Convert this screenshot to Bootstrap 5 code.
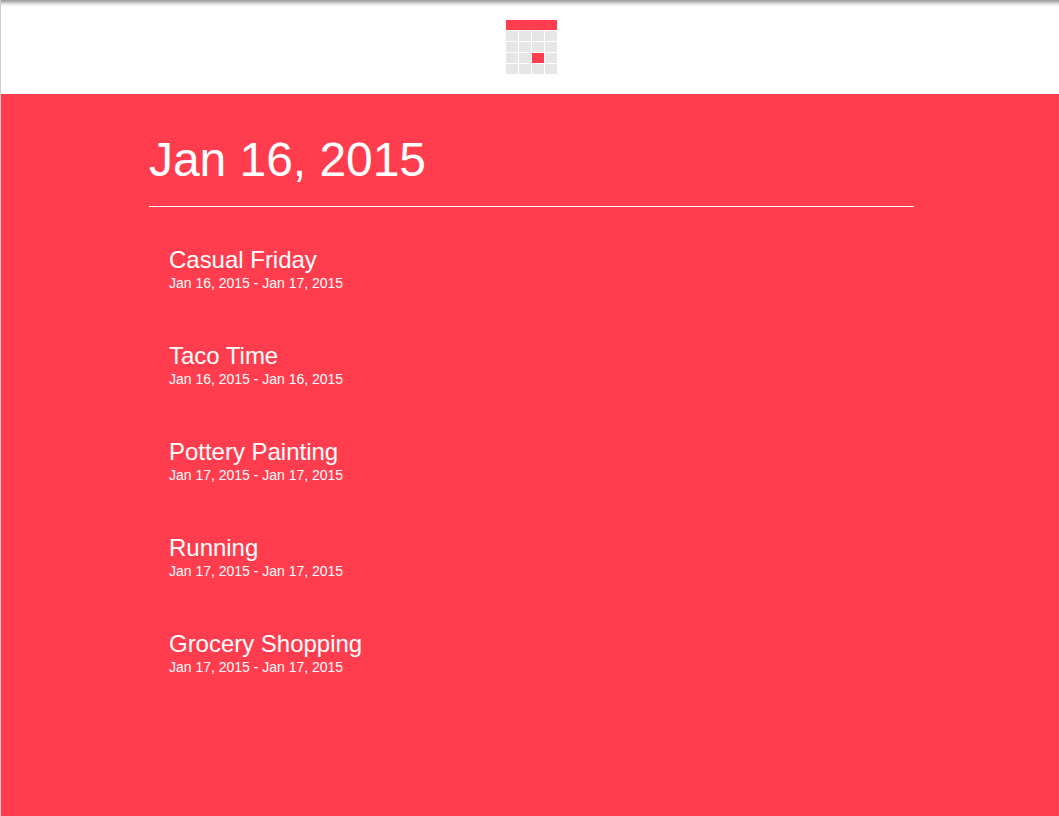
<!DOCTYPE html>
<html lang="en">
<head>
<meta charset="utf-8">
<meta name="viewport" content="width=device-width, initial-scale=1">
<title>Jan 16, 2015</title>
<link href="https://cdn.jsdelivr.net/npm/bootstrap@5.3.0/dist/css/bootstrap.min.css" rel="stylesheet">
<style>
body{font-family:"Liberation Sans",Arial,sans-serif;background:#fff;color:#fff;height:816px;border-left:1px solid #ccc;overflow:hidden}
.topbar{height:94px;padding:20px 0 0 2px;background:linear-gradient(#999 0,#a6a6a6 1px,#d0d0d0 3px,#f0f0f0 5px,#fff 7px)}
.agenda{background:#ff3d4e}
.agenda-inner{width:765px;margin-left:148px}
.day-title{font-size:48px;line-height:52px;font-weight:400;letter-spacing:-.05px;padding:40px 0 20px;margin:0;border-bottom:1px solid #fff}
.event-list{padding:39px 20px 0}
.event-item{height:96px}
.event-item h2{font-size:24px;line-height:27px;font-weight:400;letter-spacing:-.02px;margin:0}
.event-item p{font-size:14px;line-height:20px;letter-spacing:-.01px;margin:0}
</style>
</head>
<body class="d-flex flex-column">
<header class="topbar d-flex justify-content-center align-items-start flex-shrink-0">
<svg width="51" height="54" viewBox="0 0 51 54" shape-rendering="crispEdges" aria-hidden="true">
<path fill="#ff3d4e" d="M0 0h51v10H0z"/>
<path fill="#e6e6e6" d="M0 11h12v10H0zM13 11h12v10H13zM26 11h12v10H26zM39 11h12v10H39zM0 22h12v10H0zM13 22h12v10H13zM26 22h12v10H26zM39 22h12v10H39zM0 33h12v10H0zM13 33h12v10H13zM39 33h12v10H39zM0 44h12v10H0zM13 44h12v10H13zM26 44h12v10H26zM39 44h12v10H39z"/>
<path fill="#ff3d4e" d="M26 33h12v10H26z"/>
</svg>
</header>
<main class="agenda flex-grow-1">
<div class="agenda-inner">
<h1 class="day-title">Jan 16, 2015</h1>
<ul class="event-list list-unstyled mb-0">
<li class="event-item"><h2>Casual Friday</h2><p>Jan 16, 2015 - Jan 17, 2015</p></li>
<li class="event-item"><h2>Taco Time</h2><p>Jan 16, 2015 - Jan 16, 2015</p></li>
<li class="event-item"><h2>Pottery Painting</h2><p>Jan 17, 2015 - Jan 17, 2015</p></li>
<li class="event-item"><h2>Running</h2><p>Jan 17, 2015 - Jan 17, 2015</p></li>
<li class="event-item"><h2>Grocery Shopping</h2><p>Jan 17, 2015 - Jan 17, 2015</p></li>
</ul>
</div>
</main>
<script src="https://cdn.jsdelivr.net/npm/bootstrap@5.3.0/dist/js/bootstrap.bundle.min.js"></script>
</body>
</html>
